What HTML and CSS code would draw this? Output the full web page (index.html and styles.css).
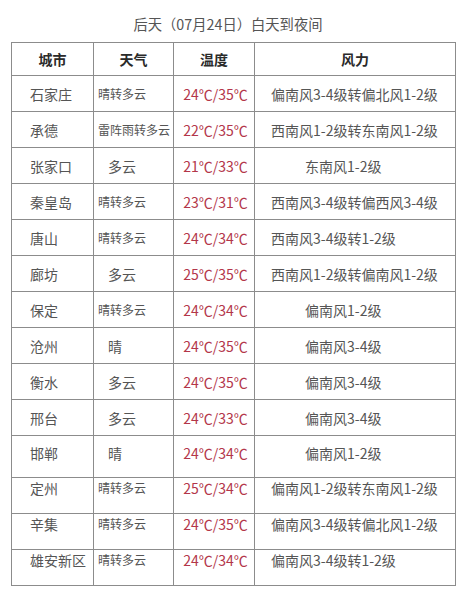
FILE: index.html
```html
<!DOCTYPE html>
<html lang="zh-CN">
<head>
<meta charset="utf-8">
<title>后天天气</title>
<link rel="stylesheet" href="styles.css">
</head>
<body>
<div class="page">
  <div class="title">后天（07月24日）白天到夜间</div>
  <table class="weather">
    <colgroup>
      <col class="c-city"><col class="c-wx"><col class="c-temp"><col class="c-wind">
    </colgroup>
    <thead>
      <tr class="head"><th>城市</th><th>天气</th><th>温度</th><th>风力</th></tr>
    </thead>
    <tbody>
      <tr><td class="city">石家庄</td><td class="wx small">晴转多云</td><td class="temp">24℃/35℃</td><td class="wind">偏南风3-4级转偏北风1-2级</td></tr>
      <tr><td class="city">承德</td><td class="wx small">雷阵雨转多云</td><td class="temp">22℃/35℃</td><td class="wind">西南风1-2级转东南风1-2级</td></tr>
      <tr><td class="city">张家口</td><td class="wx short">多云</td><td class="temp">21℃/33℃</td><td class="wind short">东南风1-2级</td></tr>
      <tr><td class="city">秦皇岛</td><td class="wx small">晴转多云</td><td class="temp">23℃/31℃</td><td class="wind">西南风3-4级转偏西风3-4级</td></tr>
      <tr><td class="city">唐山</td><td class="wx small">晴转多云</td><td class="temp">24℃/34℃</td><td class="wind">西南风3-4级转1-2级</td></tr>
      <tr><td class="city">廊坊</td><td class="wx short">多云</td><td class="temp">25℃/35℃</td><td class="wind">西南风1-2级转偏南风1-2级</td></tr>
      <tr><td class="city">保定</td><td class="wx small">晴转多云</td><td class="temp">24℃/34℃</td><td class="wind short">偏南风1-2级</td></tr>
      <tr><td class="city">沧州</td><td class="wx short">晴</td><td class="temp">24℃/35℃</td><td class="wind short">偏南风3-4级</td></tr>
      <tr><td class="city">衡水</td><td class="wx short">多云</td><td class="temp">24℃/35℃</td><td class="wind short">偏南风3-4级</td></tr>
      <tr><td class="city">邢台</td><td class="wx short">多云</td><td class="temp">24℃/33℃</td><td class="wind short">偏南风3-4级</td></tr>
      <tr class="tall"><td class="city">邯郸</td><td class="wx short">晴</td><td class="temp">24℃/34℃</td><td class="wind short">偏南风1-2级</td></tr>
      <tr class="raised"><td class="city">定州</td><td class="wx small">晴转多云</td><td class="temp">25℃/34℃</td><td class="wind">偏南风1-2级转东南风1-2级</td></tr>
      <tr class="raised"><td class="city">辛集</td><td class="wx small">晴转多云</td><td class="temp">24℃/35℃</td><td class="wind">偏南风3-4级转偏北风1-2级</td></tr>
      <tr class="raised"><td class="city">雄安新区</td><td class="wx small">晴转多云</td><td class="temp">24℃/34℃</td><td class="wind">偏南风3-4级转1-2级</td></tr>
    </tbody>
  </table>
</div>
</body>
</html>
```

FILE: styles.css
```css
html, body {
  margin: 0;
  padding: 0;
  background: #ffffff;
}

body {
  font-family: "Noto Sans CJK SC", "Noto Sans", sans-serif;
  color: #555555;
}

.page {
  width: 463px;
  padding: 0 0 0 11px;
  box-sizing: border-box;
}

.title {
  width: 443px;
  height: 42px;
  display: flex;
  align-items: center;
  justify-content: center;
  padding: 4px 9px 0 0;
  box-sizing: border-box;
  font-size: 14.3px;
  color: #555555;
}

.weather {
  width: 444px;
  border-collapse: collapse;
  table-layout: fixed;
  border: 1px solid #7f7f7f;
}

.c-city { width: 82px; }
.c-wx { width: 80px; }
.c-temp { width: 81px; }
.c-wind { width: 201px; }

.weather th,
.weather td {
  border: 1px solid #8c8c8c;
  padding: 0;
  white-space: nowrap;
  vertical-align: middle;
  line-height: 20px;
}

.head th {
  height: 32px;
  font-size: 14px;
  font-weight: 700;
  color: #2a2a2a;
  text-align: center;
}

.weather tbody tr td {
  height: 35px;
  font-size: 14px;
}

.city {
  text-align: left;
  padding-left: 18px !important;
}

.wx {
  text-align: left;
}

.wx.small {
  font-size: 12px !important;
  padding-left: 4px !important;
}

.wx.short {
  padding-left: 14px !important;
}

.temp {
  text-align: center;
  color: #b3364a;
  padding-left: 3px !important;
}

.wind {
  text-align: left;
  padding-left: 16px !important;
}

.wind.short {
  padding-left: 50px !important;
}

.weather tbody tr.tall td {
  height: 33px;
  padding-bottom: 8px;
}

.weather tbody tr.raised td {
  height: 20px;
  padding-bottom: 15px;
}
```
